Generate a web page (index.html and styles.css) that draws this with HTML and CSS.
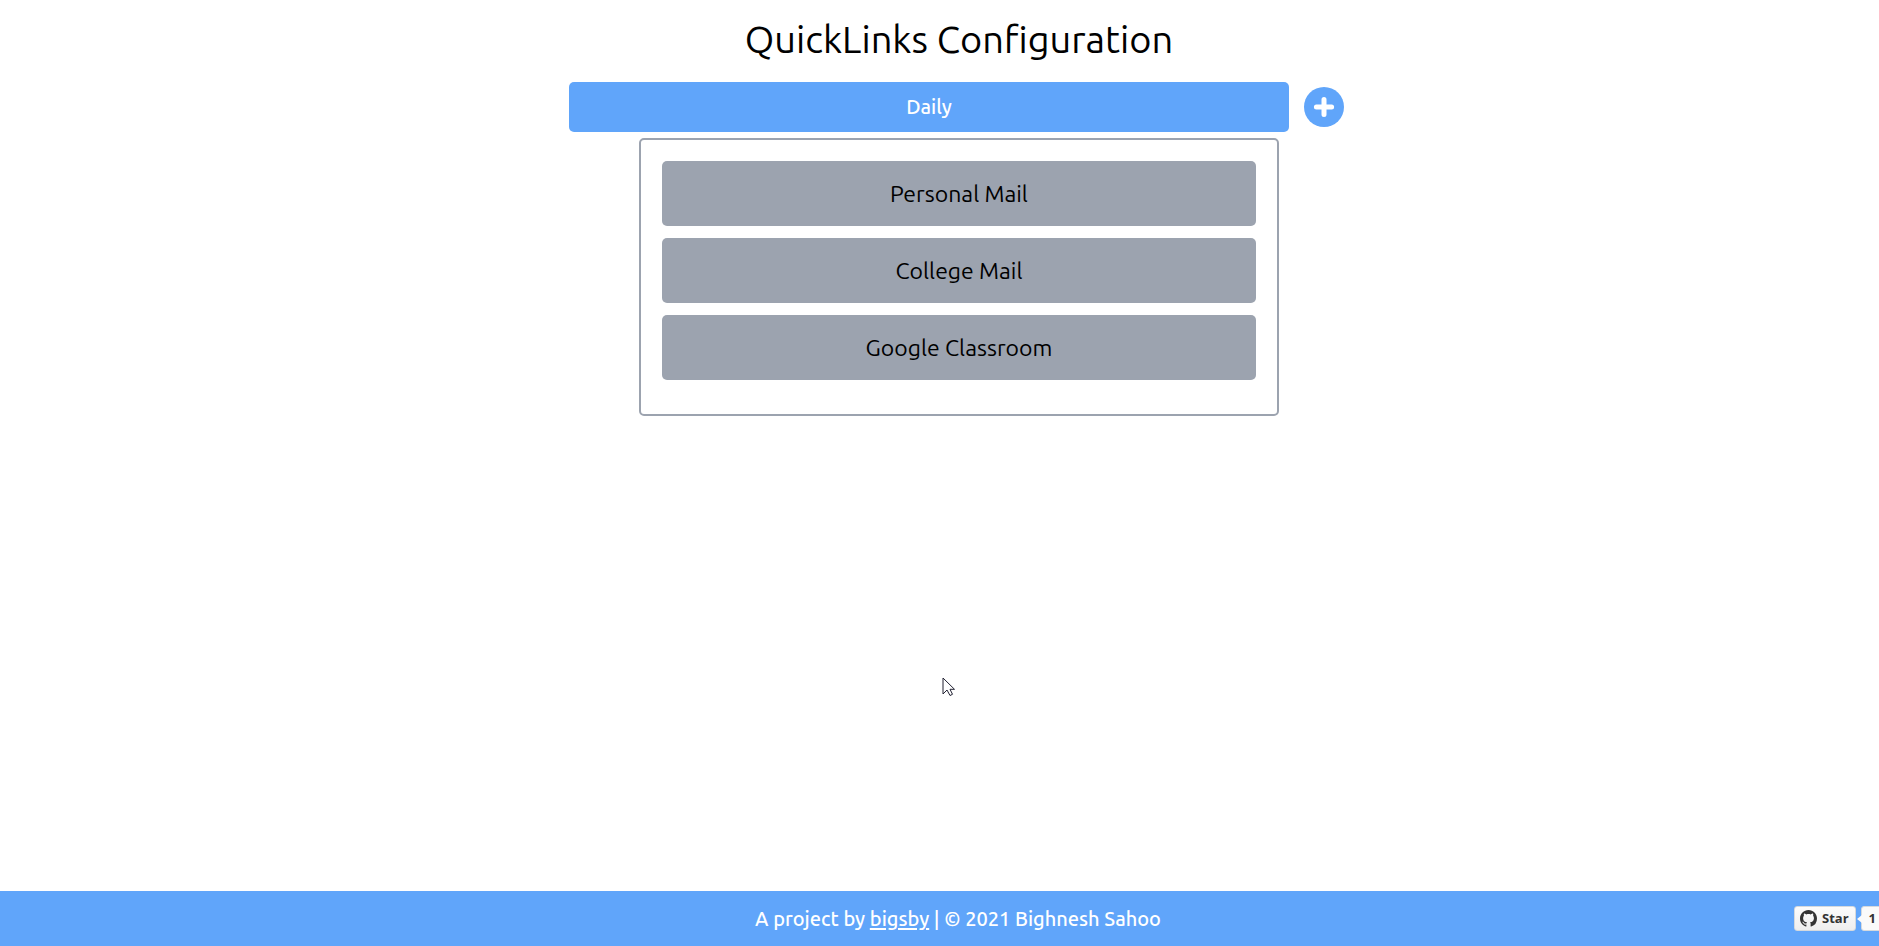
FILE: index.html
```html
<!DOCTYPE html>
<html lang="en">
<head>
<meta charset="utf-8">
<meta name="viewport" content="width=device-width, initial-scale=1">
<title>QuickLinks Configuration</title>
<link rel="stylesheet" href="styles.css">
</head>
<body>
<div class="page">
  <main class="content">
    <h1 class="title">QuickLinks Configuration</h1>
    <div class="category">
      <button class="category-name" type="button">Daily</button>
      <button class="add" type="button" aria-label="Add link">
        <svg viewBox="0 0 40 40" aria-hidden="true"><circle cx="20" cy="20" r="20" fill="#60a5fa"/><path d="M20 12.4v15.2M12.4 20h15.2" stroke="#fff" stroke-width="5" stroke-linecap="round"/></svg>
      </button>
    </div>
    <div class="links">
      <button class="link" type="button">Personal Mail</button>
      <button class="link" type="button">College Mail</button>
      <button class="link" type="button">Google Classroom</button>
    </div>
  </main>
  <footer class="footer">
    <p class="credit">A project by <a href="#">bigsby</a> | © 2021 Bighnesh Sahoo</p>
    <div class="github">
      <a class="star" href="#">
        <svg viewBox="0 0 16 16" aria-hidden="true"><path fill="#333" d="M8 0C3.58 0 0 3.58 0 8c0 3.54 2.29 6.53 5.47 7.59.4.07.55-.17.55-.38 0-.19-.01-.82-.01-1.49-2.01.37-2.53-.49-2.69-.94-.09-.23-.48-.94-.82-1.13-.28-.15-.68-.52-.01-.53.63-.01 1.08.58 1.23.82.72 1.21 1.87.87 2.33.66.07-.52.28-.87.51-1.07-1.78-.2-3.64-.89-3.64-3.95 0-.87.31-1.59.82-2.15-.08-.2-.36-1.02.08-2.12 0 0 .67-.21 2.2.82.64-.18 1.32-.27 2-.27s1.36.09 2 .27c1.53-1.04 2.2-.82 2.2-.82.44 1.1.16 1.92.08 2.12.51.56.82 1.27.82 2.15 0 3.07-1.87 3.75-3.65 3.95.29.25.54.73.54 1.48 0 1.07-.01 1.93-.01 2.2 0 .21.15.46.55.38A8.01 8.01 0 0 0 16 8c0-4.42-3.58-8-8-8z"/></svg>
        Star
      </a>
      <a class="count" href="#">1</a>
    </div>
  </footer>
</div>
<svg class="pointer" viewBox="0 0 14 20" aria-hidden="true"><path d="M1 1v16l4-4 3 5.500 2.500-1.200-2.500-5h4.500z" fill="#fff" stroke="#223" stroke-width="1"/></svg>
</body>
</html>
```
FILE: styles.css
```css
* {
  box-sizing: border-box;
}

body {
  margin: 0;
  overflow: hidden;
  background: #fff;
  color: #000;
  font-family: Ubuntu, "Noto Sans", sans-serif;
}

button {
  border: 0;
  padding: 0;
  font: inherit;
  cursor: pointer;
}

/* The page runs slightly wider than the window. */
.page {
  display: flex;
  flex-direction: column;
  width: calc(100% + 39px);
  min-height: 100vh;
}

.content {
  display: flex;
  flex: 1;
  flex-direction: column;
  align-items: center;
}

.title {
  margin: 14px 0 18px;
  font-size: 38px;
  font-weight: 400;
  line-height: 50px;
}

.category {
  display: flex;
  align-items: center;
  gap: 15px;
  width: 100%;
  max-width: 780px;
  padding-right: 5px;
}

.category-name {
  flex: 1;
  padding: 12px;
  border-radius: 5px;
  background: #60a5fa;
  color: #fff;
  font-size: 20px;
  font-weight: 500;
  line-height: 26px;
}

.add {
  width: 40px;
  height: 40px;
  border-radius: 50%;
  background: none;
}

.add svg {
  display: block;
}

.links {
  display: flex;
  flex-direction: column;
  gap: 12px;
  width: 100%;
  max-width: 640px;
  margin-top: 6px;
  padding: 21px 21px 34px;
  border: 2px solid #9ca3af;
  border-radius: 5px;
}

.link {
  padding: 18px;
  border-radius: 5px;
  background: #9ca3af;
  color: #000;
  font-size: 23px;
  line-height: 29px;
}

.footer {
  display: grid;
  grid-template-columns: 1fr auto 1fr;
  align-items: center;
  padding: 13px 34px 13px 32px;
  background: #60a5fa;
  color: #fff;
}

.credit {
  grid-column: 2;
  margin: 0;
  font-size: 20px;
  font-weight: 500;
  line-height: 29px;
}

.credit a {
  color: inherit;
  text-underline-offset: 2px;
}

.github {
  display: flex;
  gap: 5px;
  justify-self: end;
  font-family: "Open Sans", sans-serif;
  font-size: 13px;
  font-weight: 700;
  line-height: 23px;
}

.github a {
  border: 1px solid #d5d9dd;
  border-radius: 3px;
  color: #333;
  text-decoration: none;
}

.star {
  display: flex;
  align-items: center;
  gap: 5px;
  padding: 0 6px 0 5px;
  background: linear-gradient(#fcfcfc, #eee);
}

.star svg {
  width: 17px;
  height: 17px;
}

.count {
  position: relative;
  padding: 0 7px;
  background: #fafafa;
}

.count::before {
  content: "";
  position: absolute;
  top: 8px;
  left: -5px;
  border: 4px solid transparent;
  border-left: 0;
  border-right: 5px solid #fafafa;
}

.pointer {
  position: absolute;
  top: 677px;
  left: 942px;
  width: 14px;
  height: 20px;
}
```
